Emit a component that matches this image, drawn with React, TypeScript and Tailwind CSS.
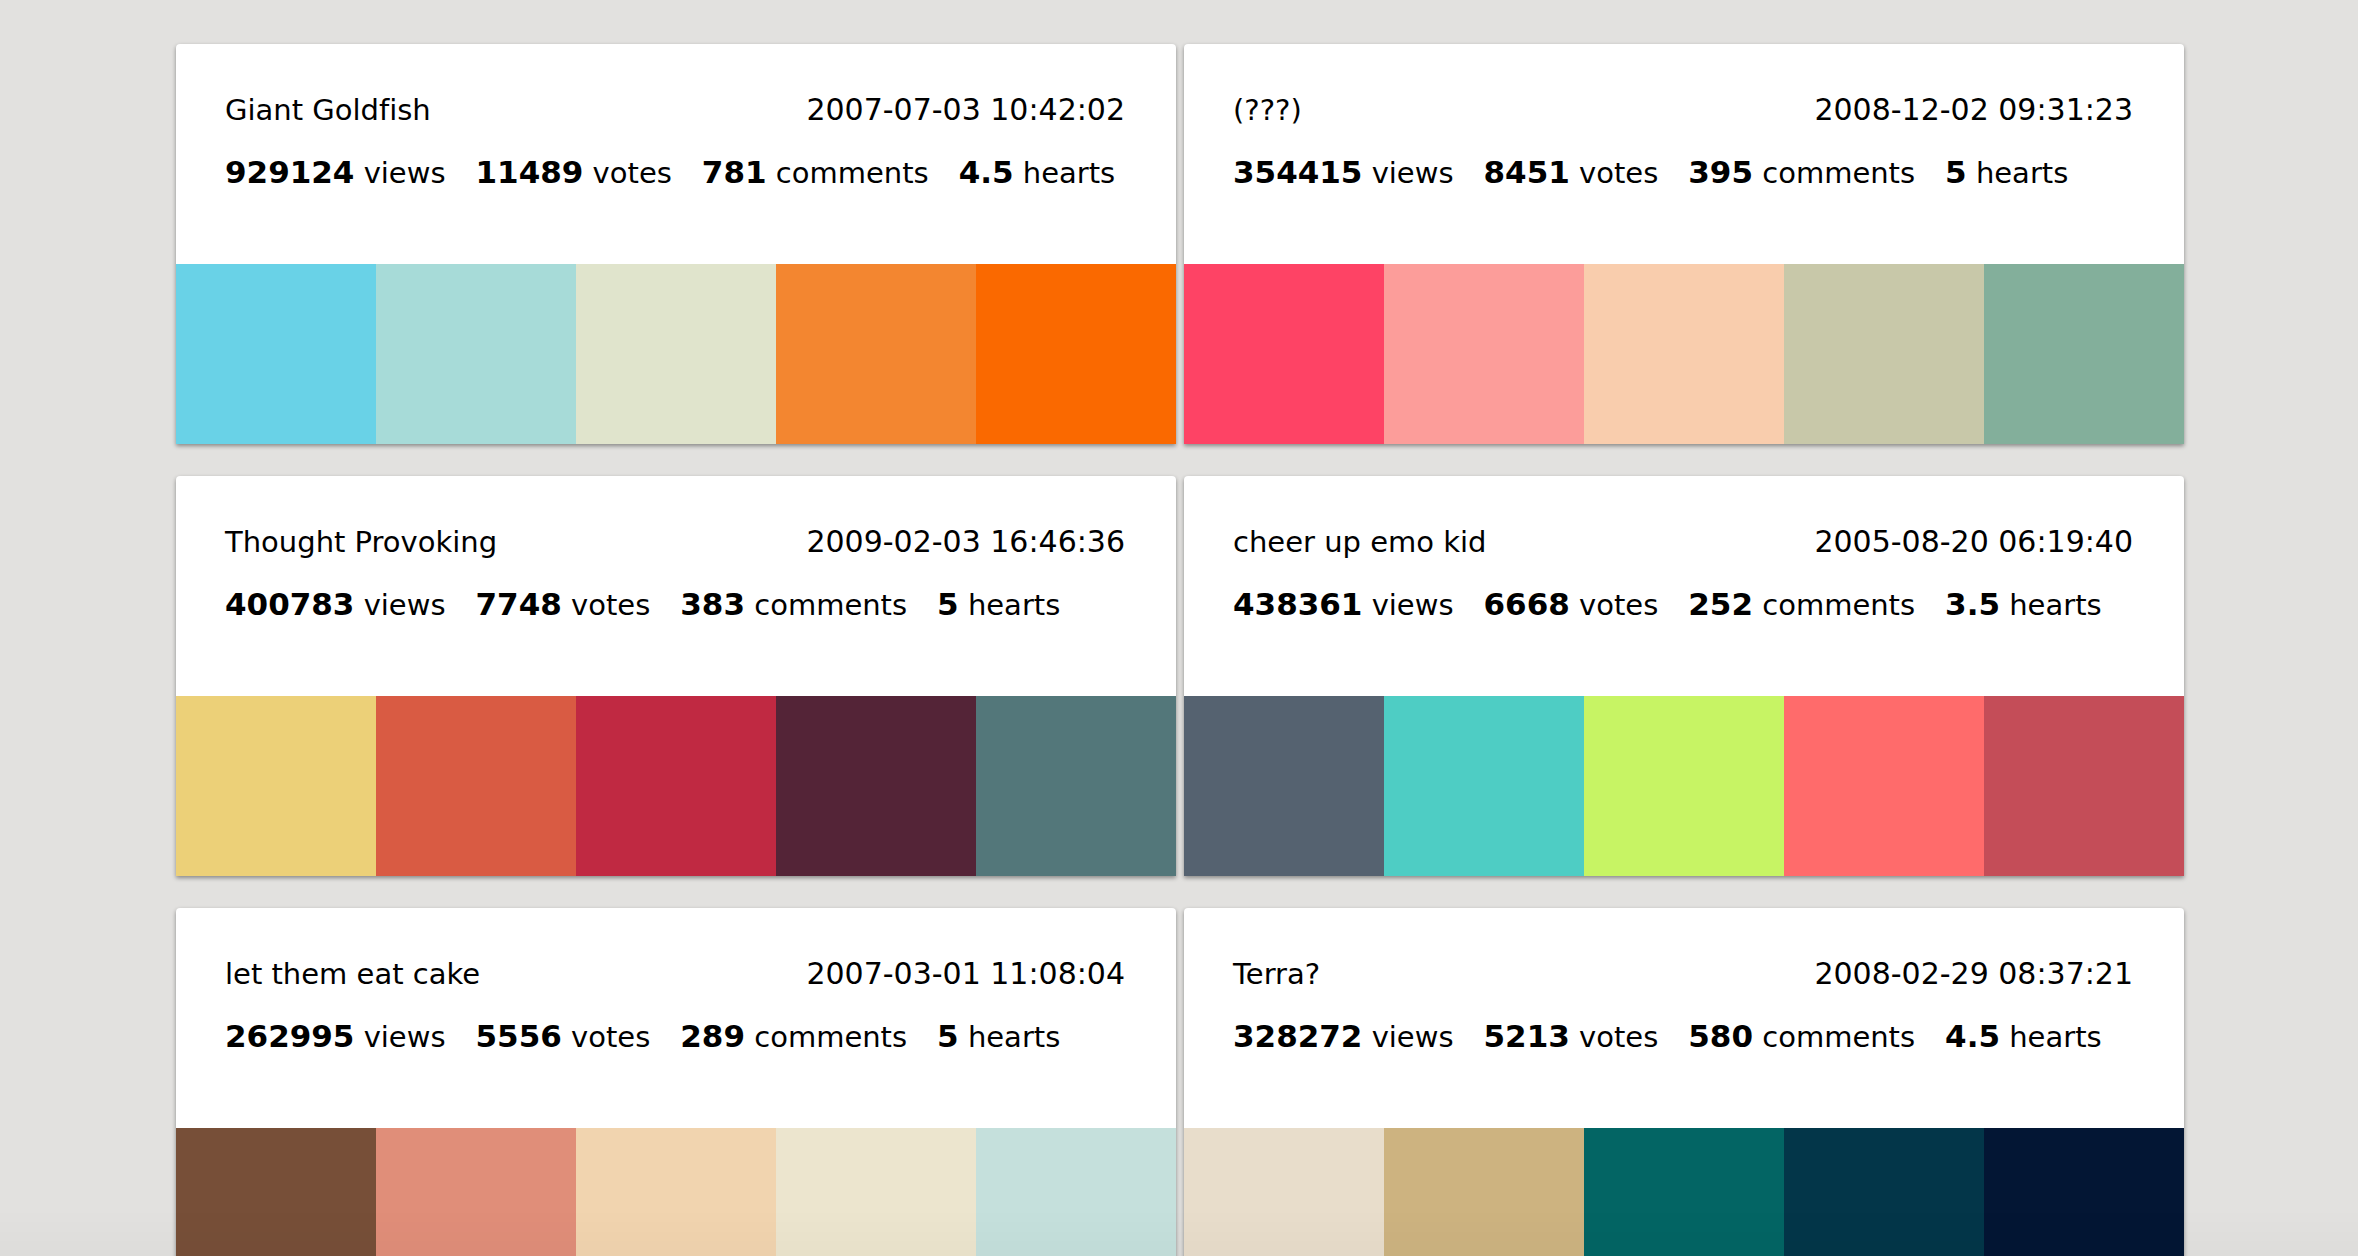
type Palette = {
  title: string;
  created: string;
  views: string;
  votes: string;
  comments: string;
  hearts: string;
  colors: string[];
};

const palettes: Palette[] = [
  {
    title: "Giant Goldfish", created: "2007-07-03 10:42:02",
    views: "929124", votes: "11489", comments: "781", hearts: "4.5",
    colors: ["bg-[#69D2E7]", "bg-[#A7DBD8]", "bg-[#E0E4CC]", "bg-[#F38630]", "bg-[#FA6900]"],
  },
  {
    title: "(???)", created: "2008-12-02 09:31:23",
    views: "354415", votes: "8451", comments: "395", hearts: "5",
    colors: ["bg-[#FE4365]", "bg-[#FC9D9A]", "bg-[#F9CDAD]", "bg-[#C8C8A9]", "bg-[#83AF9B]"],
  },
  {
    title: "Thought Provoking", created: "2009-02-03 16:46:36",
    views: "400783", votes: "7748", comments: "383", hearts: "5",
    colors: ["bg-[#ECD078]", "bg-[#D95B43]", "bg-[#C02942]", "bg-[#542437]", "bg-[#53777A]"],
  },
  {
    title: "cheer up emo kid", created: "2005-08-20 06:19:40",
    views: "438361", votes: "6668", comments: "252", hearts: "3.5",
    colors: ["bg-[#556270]", "bg-[#4ECDC4]", "bg-[#C7F464]", "bg-[#FF6B6B]", "bg-[#C44D58]"],
  },
  {
    title: "let them eat cake", created: "2007-03-01 11:08:04",
    views: "262995", votes: "5556", comments: "289", hearts: "5",
    colors: ["bg-[#774F38]", "bg-[#E08E79]", "bg-[#F1D4AF]", "bg-[#ECE5CE]", "bg-[#C5E0DC]"],
  },
  {
    title: "Terra?", created: "2008-02-29 08:37:21",
    views: "328272", votes: "5213", comments: "580", hearts: "4.5",
    colors: ["bg-[#E8DDCB]", "bg-[#CDB380]", "bg-[#036564]", "bg-[#033649]", "bg-[#031634]"],
  },
];

function Stat({ value, label }: { value: string; label: string }) {
  return (
    <li>
      <strong className="text-[31px] leading-9 font-bold">{value}</strong> {label}
    </li>
  );
}

function PaletteCard({ palette }: { palette: Palette }) {
  return (
    <article className="rounded-t bg-white shadow-[0_2px_4px_rgba(0,0,0,0.4)]">
      <div className="pt-12 pr-[51px] pb-[73px] pl-[49px]">
        <header className="flex items-center justify-between gap-8 leading-9">
          <h2>{palette.title}</h2>
          <time className="text-[30px] leading-9">{palette.created}</time>
        </header>
        <ul className="mt-[26px] flex flex-wrap gap-x-[30px] leading-9">
          <Stat value={palette.views} label="views" />
          <Stat value={palette.votes} label="votes" />
          <Stat value={palette.comments} label="comments" />
          <Stat value={palette.hearts} label="hearts" />
        </ul>
      </div>
      <div className="flex h-[180px]">
        {palette.colors.map((color) => (
          <div key={color} className={`flex-1 ${color}`} />
        ))}
      </div>
    </article>
  );
}

export default function App() {
  return (
    <div className="h-screen overflow-hidden bg-[#e2e1df] pt-11 pl-0.5 font-[Verdana,'DejaVu_Sans',sans-serif] text-[29px] text-black [font-variant-ligatures:none]">
      <main className="mx-auto grid max-w-[2008px] grid-cols-2 gap-x-2 gap-y-8">
        {palettes.map((palette) => (
          <PaletteCard key={palette.title} palette={palette} />
        ))}
      </main>
      <div className="pointer-events-none fixed inset-x-0 bottom-0 h-12 bg-linear-to-b from-transparent to-black/2" />
    </div>
  );
}
